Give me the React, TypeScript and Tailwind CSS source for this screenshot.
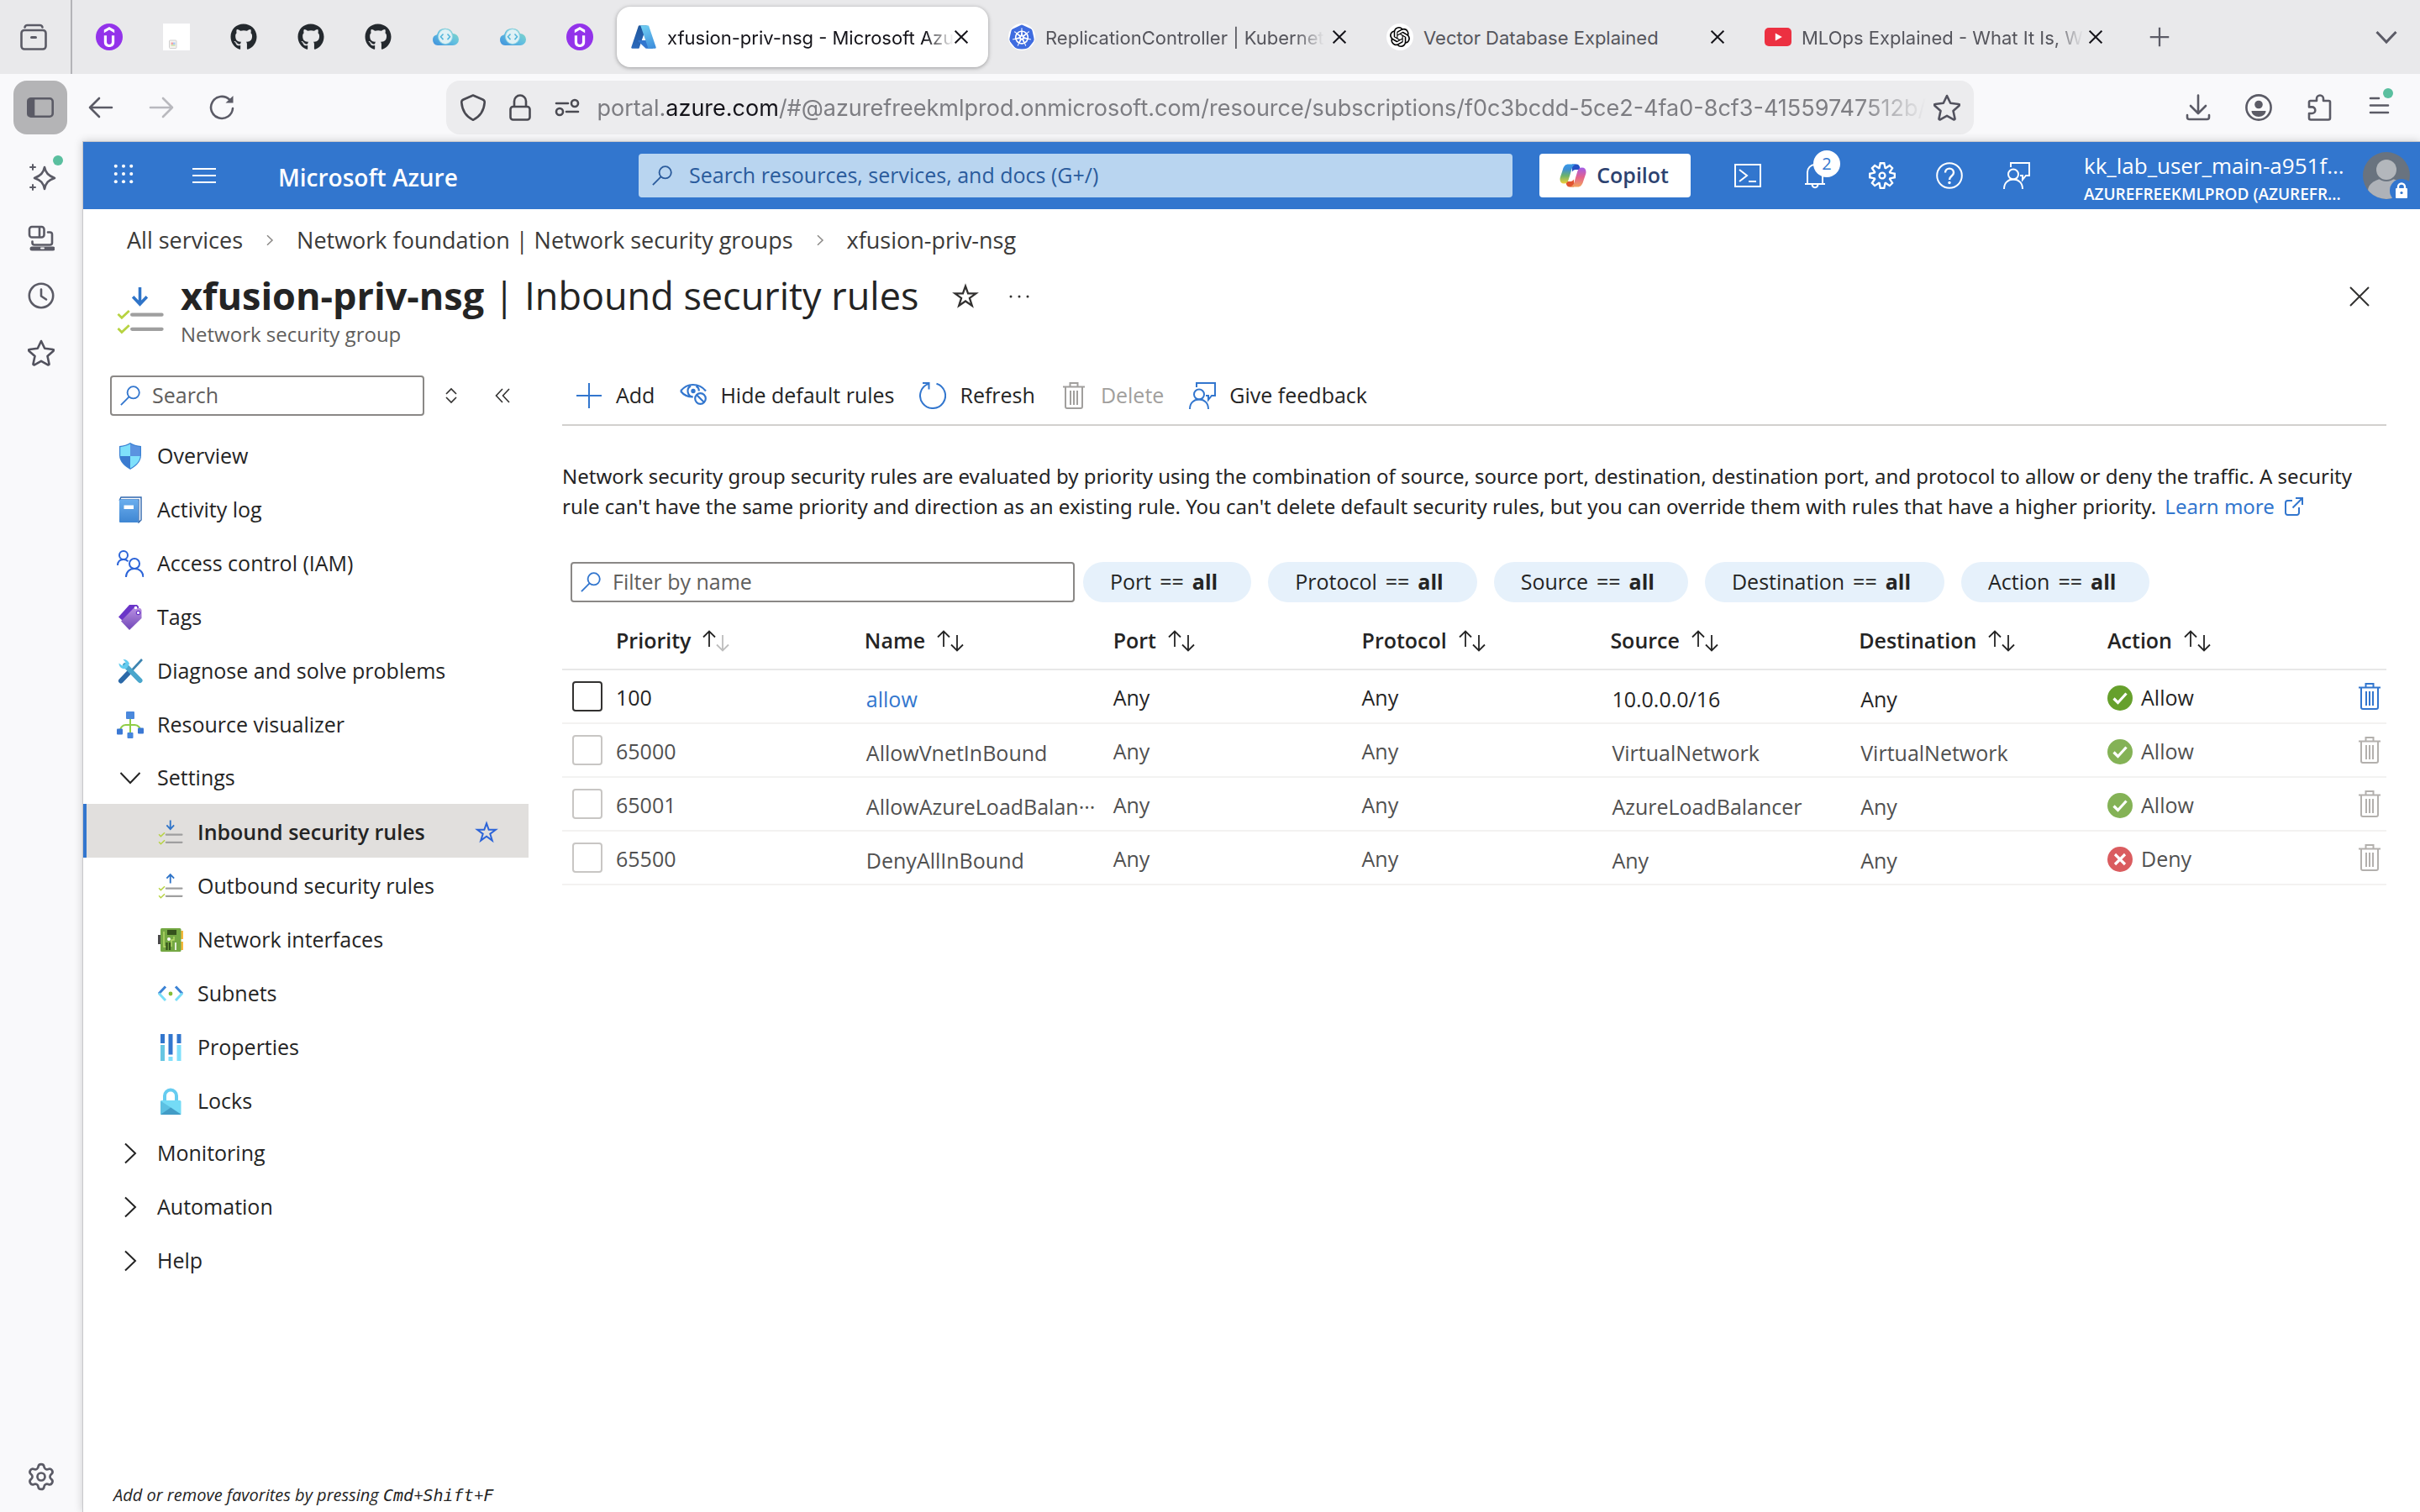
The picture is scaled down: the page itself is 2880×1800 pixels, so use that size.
import React from "react";
import clsx from "clsx";
import { Settings } from "lucide-react";
import { FaGithub } from "react-icons/fa";
import { SiKubernetes, SiOpenai, SiUdemy } from "react-icons/si";
import { VscSettingsGear } from "react-icons/vsc";

type IconProps = { className?: string };

/* ---------- browser icons ---------- */

function ArchiveIcon() {
  return (
    <svg viewBox="0 0 32 32" className="size-8" fill="none" stroke="#5b5b66" strokeWidth="2.600" strokeLinecap="round">
      <path d="M5.500 4.500C6 2.200 7 2 8.500 2h15c1.500 0 2.500.2 3 2.500" />
      <rect x="1.500" y="8" width="29" height="22.500" rx="3.500" />
      <path d="M13.500 16.500h5" strokeWidth="3" />
    </svg>
  );
}

function CloudIcon({ id }: { id: string }) {
  return (
    <svg viewBox="0 0 32 32" className="size-8">
      <defs>
        <linearGradient id={id} x1="0" y1="1" x2="1" y2="0">
          <stop offset="0" stopColor="#3d8fdc" />
          <stop offset="0.5" stopColor="#62bfe0" />
          <stop offset="1" stopColor="#8adcc0" />
        </linearGradient>
      </defs>
      <path d="M7 26a6.500 6.500 0 0 1-1-12.800A10 10 0 0 1 25 12a7 7 0 0 1 0 14z" fill={`url(#${id})`} />
      <ellipse cx="16" cy="15.500" rx="8.500" ry="9" fill="#dff1f5" stroke="#8ed3e4" strokeWidth="1" />
      <path d="M13.500 12.500l-3 3.300 3 3.300M18.500 12.500l3 3.300-3 3.300" fill="none" stroke="#55b7dc" strokeWidth="1.600" />
    </svg>
  );
}

function UdemyIcon() {
  return (
    <span className="flex size-8 items-center justify-center rounded-full bg-[#9333ea]">
      <SiUdemy className="size-6 text-white" />
    </span>
  );
}

function DocIcon() {
  return (
    <svg viewBox="0 0 32 32" className="size-8">
      <rect width="32" height="32" fill="#fff" />
      <rect x="7.500" y="20" width="8.500" height="9.500" rx="1" fill="#f7f4f0" stroke="#cfcfcf" />
      <rect x="9.500" y="22.500" width="2.500" height="2.500" fill="#f3a4a4" />
      <rect x="12" y="22.500" width="2.500" height="2.500" fill="#a9c8f5" />
      <rect x="9.500" y="25" width="5" height="2" fill="#d6e6b8" />
    </svg>
  );
}

function AzureLogo() {
  return (
    <svg viewBox="0 0 96 96" className="size-8">
      <defs>
        <linearGradient id="az-a" x1="60.900" y1="9.600" x2="18.700" y2="134.400" gradientUnits="userSpaceOnUse" gradientTransform="translate(0 -10)">
          <stop stopColor="#1d5396" />
          <stop offset="1" stopColor="#2f70c8" />
        </linearGradient>
        <linearGradient id="az-b" x1="46" y1="10" x2="82" y2="86" gradientUnits="userSpaceOnUse">
          <stop stopColor="#6fcdf2" />
          <stop offset="1" stopColor="#3f8fdc" />
        </linearGradient>
      </defs>
      <path fill="url(#az-a)" d="M33.338 6.544h26.038l-27.030 80.087a4.152 4.152 0 0 1-3.933 2.824H8.149a4.145 4.145 0 0 1-3.928-5.470L29.404 9.368a4.152 4.152 0 0 1 3.934-2.825z" />
      <path fill="#3276ce" d="M71.175 60.261h-41.290a1.911 1.911 0 0 0-1.305 3.309l26.532 24.764a4.171 4.171 0 0 0 2.846 1.121h23.380z" />
      <path fill="url(#az-b)" d="M66.595 9.364a4.145 4.145 0 0 0-3.928-2.820H33.648a4.146 4.146 0 0 1 3.928 2.820l25.184 74.620a4.146 4.146 0 0 1-3.928 5.472h29.020a4.146 4.146 0 0 0 3.927-5.472z" />
    </svg>
  );
}

function KubernetesIcon() {
  return <SiKubernetes className="size-8 rounded-full bg-white p-px text-[#3f6ce0]" />;
}

function OpenAiIcon() {
  return (
    <span className="flex size-8 items-center justify-center rounded-full bg-white">
      <SiOpenai className="size-6 text-black" />
    </span>
  );
}

function YoutubeIcon() {
  return (
    <svg viewBox="0 0 32 32" className="size-8">
      <rect y="5" width="32" height="22" rx="5" fill="#ec3041" />
      <path d="M12.800 11.500v9l8-4.500z" fill="#fff" />
    </svg>
  );
}

function CrossIcon({ className }: IconProps) {
  return (
    <svg viewBox="0 0 24 24" className={className} fill="none" stroke="currentColor">
      <path d="M1 1l22 22M23 1L1 23" />
    </svg>
  );
}

function PanelIcon() {
  return (
    <svg viewBox="0 0 32 24" className="w-8" fill="none" stroke="#5b5b66" strokeWidth="2.600">
      <rect x="1.300" y="1.300" width="29.400" height="21.400" rx="3.500" />
      <path d="M2 3h6v18H2z" fill="#5b5b66" />
    </svg>
  );
}

function BackIcon({ className }: IconProps) {
  return (
    <svg viewBox="0 0 32 32" className={className} fill="none" stroke="currentColor" strokeWidth="2.600" strokeLinecap="round" strokeLinejoin="round">
      <path d="M29 16H3M14 5L3 16l11 11" />
    </svg>
  );
}

function ReloadIcon() {
  return (
    <svg viewBox="0 0 32 32" className="size-8" fill="none" stroke="#5b5b66" strokeWidth="2.600" strokeLinecap="round">
      <path d="M29 17a13 13 0 1 1-4-10.500" />
      <path d="M29.500 2v8.500h-9z" fill="#5b5b66" stroke="none" />
    </svg>
  );
}

function ShieldIcon() {
  return (
    <svg viewBox="0 0 32 32" className="size-8 shrink-0" fill="none" stroke="#4a4a52" strokeWidth="2.600" strokeLinejoin="round">
      <path d="M16 1.500l11.500 5c1.600.7 2.400 2 2.200 3.700C29 19 25 26.500 16 30.800 7 26.500 3 19 2.300 10.200 2.100 8.500 2.900 7.200 4.500 6.500z" />
    </svg>
  );
}

function LockIcon() {
  return (
    <svg viewBox="0 0 32 32" className="size-8 shrink-0" fill="none" stroke="#4a4a52" strokeWidth="2.600">
      <rect x="4.500" y="15" width="23" height="15.500" rx="3" />
      <path d="M9 15V8.500a7 7 0 0 1 14 0V15" />
    </svg>
  );
}

function TuneIcon() {
  return (
    <svg viewBox="0 0 32 32" className="size-8 shrink-0" fill="none" stroke="#4a4a52" strokeWidth="2.600" strokeLinecap="round">
      <path d="M3 11h14M15 21h14" />
      <circle cx="25" cy="11" r="4" />
      <circle cx="7" cy="21" r="4" />
    </svg>
  );
}

function RoundStarIcon() {
  return (
    <svg viewBox="0 0 32 32" className="size-8" fill="none" stroke="#52525e" strokeWidth="2.600" strokeLinejoin="round">
      <path d="M16 2l4.200 8.800 9.800 1.200c1 .1 1.300 1 .6 1.700L23.500 20l2 9.200c.2 1-.7 1.600-1.500 1.100L16 25.800l-8 4.500c-.8.500-1.700-.1-1.500-1.100l2-9.200-7.100-6.300c-.7-.7-.4-1.600.6-1.700l9.800-1.200z" />
    </svg>
  );
}

function DownloadIcon() {
  return (
    <svg viewBox="0 0 32 32" className="size-8" fill="none" stroke="#5b5b66" strokeWidth="2.600" strokeLinecap="round" strokeLinejoin="round">
      <path d="M16 1.500v21M7 14l9 9 9-9M3 25v2.500A2.500 2.500 0 0 0 5.500 30h21a2.500 2.500 0 0 0 2.500-2.500V25" />
    </svg>
  );
}

function ProfileIcon() {
  return (
    <svg viewBox="0 0 32 32" className="size-8">
      <circle cx="16" cy="16" r="14.600" fill="none" stroke="#5b5b66" strokeWidth="2.600" />
      <circle cx="16" cy="12.500" r="4.800" fill="#5b5b66" />
      <path d="M7.500 20h17c0 4-4 7-8.500 7s-8.500-3-8.500-7z" fill="#5b5b66" />
    </svg>
  );
}

function PuzzleIcon() {
  return (
    <svg viewBox="0 0 32 32" className="size-8" fill="none" stroke="#5b5b66" strokeWidth="2.600" strokeLinejoin="round">
      <path d="M4 13V9.500A1.500 1.500 0 0 1 5.500 8H13V5.500a4 4 0 0 1 8 0V8h6.500A1.500 1.500 0 0 1 29 9.500v19a2 2 0 0 1-2 2H6a2 2 0 0 1-2-2V23h3.500a3.800 3.800 0 0 0 0-7.600H4z" />
    </svg>
  );
}

function MenuDotIcon() {
  return (
    <svg viewBox="0 0 32 40" className="h-10 w-8" fill="none" stroke="#5b5b66" strokeWidth="2.600" strokeLinecap="round">
      <path d="M5 13h10M5 21.500h21M5 30h21" />
      <circle cx="26" cy="7" r="6" fill="#5abf9f" stroke="none" />
    </svg>
  );
}

function SparkleIcon() {
  return (
    <svg viewBox="0 0 44 44" className="size-11" fill="none" stroke="#5b5b66" strokeWidth="2.600" strokeLinejoin="round" strokeLinecap="round">
      <path d="M22 15c1.500 7 4.500 10 12 13-7.500 2.500-10.500 5.500-12 13-1.500-7.500-4.500-10.500-12-13 7.500-3 10.500-6 12-13z" />
      <path d="M8 12v6M5 15h6M8 36v6M5 39h6" strokeWidth="2" />
      <circle cx="38" cy="7" r="6" fill="#5abf9f" stroke="none" />
    </svg>
  );
}

function DevicesIcon() {
  return (
    <svg viewBox="0 0 32 32" className="size-8" fill="none" stroke="#5b5b66" strokeWidth="2.600" strokeLinejoin="round" strokeLinecap="round">
      <rect x="2" y="2" width="17.500" height="12.500" rx="3" />
      <path d="M14 3v11M24 8.500h2.500a2.500 2.500 0 0 1 2.500 2.500v10c0 1.500-1 2.500-2.500 2.500H8c-1.500 0-2.500-1-2.500-2.500v-1.500" />
      <path d="M5 28h25" strokeWidth="5" />
      <path d="M16 27.500h3" stroke="#f9f9fb" strokeWidth="2" />
    </svg>
  );
}

function ClockIcon() {
  return (
    <svg viewBox="0 0 32 32" className="size-8" fill="none" stroke="#5b5b66" strokeWidth="2.600" strokeLinecap="round" strokeLinejoin="round">
      <circle cx="16" cy="16" r="14.200" />
      <path d="M16 8.500v8l6 4" />
    </svg>
  );
}

/* ---------- portal icons ---------- */

function SearchIcon({ className }: IconProps) {
  return (
    <svg viewBox="0 0 26 26" className={clsx("size-6 shrink-0", className)} fill="none" stroke="currentColor" strokeWidth="2">
      <circle cx="17" cy="9" r="7.700" />
      <path d="M11.500 14.500L1 25" />
    </svg>
  );
}

function StarIcon({ className }: IconProps) {
  return (
    <svg viewBox="0 0 28 28" className={className} fill="none" stroke="currentColor" strokeWidth="2" strokeLinejoin="miter">
      <path d="M14 3.200l2.700 7.600h8.200l-6.600 4.900 2.500 7.900L14 18.800l-6.800 4.800 2.500-7.900-6.600-4.900h8.200z" />
    </svg>
  );
}

function RulesIcon({ up, className }: IconProps & { up?: boolean }) {
  return (
    <svg viewBox="0 0 57 62" className={className} fill="none">
      <path d={up ? "M28 24V4M19.500 13L28 4l8.500 9" : "M28 3v20M19.500 14.500L28 23.500l8.500-9"} stroke="#2f74c8" strokeWidth="3.600" />
      <path d="M18.500 36.300h36M18.500 53.800h36" stroke="#9f9f9f" strokeWidth="4.400" strokeLinecap="round" />
      <path d="M1.500 35.500L6 40l9-8.500M1.500 53L6 57.500l9-8.500" stroke="#b7d341" strokeWidth="2.800" />
    </svg>
  );
}

function OverviewIcon() {
  return (
    <svg viewBox="0 0 32 32" className="size-8">
      <path d="M16 0c3.500 2.500 8 3.500 13 4v11c0 8-7 13.500-13 17C10 28.500 3 23 3 15V4c5-.5 9.500-1.500 13-4z" fill="#3b82d4" />
      <path d="M16 1.500V16H4.200V5.200C9 4.500 12.800 3.500 16 1.500z" fill="#7fe0fb" />
      <path d="M16 1.500V16h11.800V5.200C23 4.500 19.200 3.500 16 1.500z" fill="#5b93e0" />
      <path d="M4.200 16H16v14.500C10 27 4.500 22.500 4.200 16z" fill="#3b7bd0" />
      <path d="M27.800 16H16v14.500C22 27 27.500 22.500 27.800 16z" fill="#7fe0fb" />
    </svg>
  );
}

function LogIcon() {
  return (
    <svg viewBox="0 0 32 32" className="size-8">
      <defs>
        <linearGradient id="log" x1="0" y1="0" x2="0" y2="1">
          <stop stopColor="#6aaeee" />
          <stop offset="1" stopColor="#3f86d2" />
        </linearGradient>
      </defs>
      <path d="M5 1h24v27l-3 3V4H3.500z" fill="#fff" stroke="#2f66ad" strokeWidth="1.400" />
      <rect x="3" y="3.500" width="22.500" height="27.500" rx="1" fill="url(#log)" />
      <rect x="8.500" y="10.500" width="11.500" height="4.500" fill="#fff" />
    </svg>
  );
}

function AccessIcon() {
  return (
    <svg viewBox="0 0 32 32" className="size-8" fill="none" stroke="#2c64d8" strokeWidth="2">
      <circle cx="8" cy="6" r="5" />
      <path d="M1 18c0-4.500 3-7 7-7 2.500 0 4 .8 5.500 2.300" />
      <circle cx="21" cy="16" r="6" />
      <path d="M11 32c0-6 4-10 10-10s10.500 4 10.500 10" />
    </svg>
  );
}

function TagsIcon() {
  return (
    <svg viewBox="0 0 32 32" className="size-8">
      <defs>
        <linearGradient id="tag" x1="0" y1="0" x2="0" y2="1">
          <stop stopColor="#b78ee0" />
          <stop offset="1" stopColor="#7046b8" />
        </linearGradient>
      </defs>
      <path d="M15 1h9l2 2v6L7 20l-5-4.500z" fill="#6a35c8" />
      <path d="M20 5h8l1.500 2v10L15 31 5 20.500z" fill="url(#tag)" />
      <circle cx="22.500" cy="4.500" r="1.800" fill="#fff" />
      <circle cx="25.500" cy="10.500" r="2.200" fill="#fff" stroke="#6a35c8" strokeWidth="1.200" />
    </svg>
  );
}

function ToolsIcon() {
  return (
    <svg viewBox="0 0 32 32" className="size-8" fill="none">
      <path d="M30 2l-12 13" stroke="#3d84b0" strokeWidth="2.600" />
      <path d="M14 18L5 27.500" stroke="#2c69a8" strokeWidth="6" strokeLinecap="round" />
      <path d="M10 9l17.500 18" stroke="#4aa6cc" strokeWidth="6" strokeLinecap="round" />
      <path d="M2.500 6.500a6.500 6.500 0 0 0 9.500 6l3-5.500a7 7 0 0 0-7.500-5l3 3.500-1 3-3 1z" fill="#63cdf0" />
    </svg>
  );
}

function VisualizerIcon() {
  return (
    <svg viewBox="0 0 32 32" className="size-8">
      <path d="M16 9v17M3.500 25c0-5 3-9 7-9h11c4 0 7 4 7 8" fill="none" stroke="#8fce45" strokeWidth="2" />
      <rect x="11" y="0" width="10" height="9" rx="1" fill="#4a88dc" />
      <rect x="0" y="20.500" width="7" height="7" rx="1" fill="#3b78d4" />
      <rect x="25" y="19.500" width="7" height="7" rx="1" fill="#3b78d4" />
      <rect x="12.500" y="25" width="7" height="7" rx="1" fill="#4585dc" />
    </svg>
  );
}

function NicIcon() {
  return (
    <svg viewBox="0 0 32 32" className="size-8">
      <rect x="1" y="10" width="3" height="11" fill="#4a4a4a" />
      <rect x="27" y="5" width="4" height="10" fill="#f4b73b" />
      <rect x="27" y="18" width="4" height="10" fill="#f4b73b" />
      <rect x="4" y="2" width="24.500" height="28" rx="1.500" fill="#74a843" />
      <rect x="12" y="4" width="11" height="6" fill="#35521c" />
      <path d="M8 6v18h3M20 12v4h-3v8" fill="none" stroke="#b9dc6a" strokeWidth="1.400" />
      <circle cx="14" cy="15" r="2" fill="#fff" />
      <path d="M11.500 19v9M15 19v9" stroke="#35521c" strokeWidth="2.200" />
      <path d="M22 19v9" stroke="#fff" strokeWidth="1.600" />
    </svg>
  );
}

function SubnetIcon() {
  return (
    <svg viewBox="0 0 32 32" className="size-8" fill="none" strokeWidth="3">
      <path d="M10 7.500L2 16M22 7.500l8 8.500" stroke="#3b82d4" />
      <path d="M2 15.500l8 8.500M30 15.500L22 24" stroke="#79def8" />
      <circle cx="16" cy="16" r="2.400" fill="#84bd38" />
    </svg>
  );
}

function PropertiesIcon() {
  return (
    <svg viewBox="0 0 32 32" className="size-8">
      <rect x="4" y="0" width="5" height="11" fill="#3276ce" />
      <rect x="4" y="13" width="5" height="19" fill="#66c6e2" />
      <rect x="13.500" y="0" width="5" height="24.500" fill="#3276ce" />
      <rect x="13.500" y="27" width="5" height="5" fill="#7fe0fb" />
      <rect x="23.500" y="0" width="5" height="11" fill="#3276ce" />
      <rect x="23.500" y="13" width="5" height="19" fill="#7fe0fb" />
    </svg>
  );
}

function PadlockIcon() {
  return (
    <svg viewBox="0 0 32 32" className="size-8">
      <path d="M9 16V9.500a7 7 0 0 1 14 0V16" fill="none" stroke="#66ccf0" strokeWidth="4" />
      <rect x="4" y="15" width="24.500" height="17" rx="1.500" fill="#74dbf6" />
      <path d="M4 15.500L28.500 31.500c-.3.500-.5.500-1 .5h-22C4.500 32 4 31.500 4 30.500z" fill="#5cc0e2" />
      <path d="M16.200 23.500L28 31.600c-.2.300-.5.400-1 .4H5.500c-.5 0-.8-.1-1-.4z" fill="#429cc6" />
    </svg>
  );
}

function ChevronIcon({ className }: IconProps) {
  return (
    <svg viewBox="0 0 32 32" className={className} fill="none" stroke="currentColor">
      <path d="M10 4.500L22 16 10 27.500" />
    </svg>
  );
}

function SortIcon({ faded }: { faded?: boolean }) {
  return (
    <svg viewBox="0 0 32 26" className="w-8" fill="none" stroke="#242424" strokeWidth="1.800">
      <path d="M8 20V1.500M1 8.500l7-7 7 7" />
      <path d="M24 6v18.500M17 17.500l7 7 7-7" stroke={faded ? "#bdbdbd" : "#242424"} />
    </svg>
  );
}

function PlusIcon({ className }: IconProps) {
  return (
    <svg viewBox="0 0 32 32" className={className} fill="none" stroke="currentColor" strokeWidth="2">
      <path d="M16 1v30M1 16h30" />
    </svg>
  );
}

function HideIcon() {
  return (
    <svg viewBox="0 0 32 32" className="size-8" fill="none" stroke="#3276ce" strokeWidth="2.200">
      <path d="M1 10.500C5 5.500 10 3 15.500 3S27 5.500 31 10.500M1 10.500C4 14.500 9 17.500 15.500 17.500" />
      <path d="M13 4.500a7 7 0 0 0 2.500 13M19.500 4.500a7 7 0 0 1 3.300 6" />
      <circle cx="16" cy="10.500" r="1.600" fill="#3276ce" />
      <circle cx="24.500" cy="19.500" r="6.300" />
      <path d="M20 15l9 9" />
    </svg>
  );
}

function RefreshIcon() {
  return (
    <svg viewBox="0 0 32 32" className="size-8" fill="none" stroke="#3276ce" strokeWidth="2">
      <path d="M20.500 1.700A15 15 0 1 1 11 1.900M4 1h7.500v7.500" />
    </svg>
  );
}

function TrashIcon({ className }: IconProps) {
  return (
    <svg viewBox="0 0 32 32" className={clsx("size-8", className)} fill="none" stroke="currentColor" strokeWidth="2">
      <path d="M3 5.500h26M11.500 5.500V1h9v4.500M6 5.500V29c0 1.200.8 2 2 2h16c1.200 0 2-.8 2-2V5.500M12 10v17M16 10v17M20 10v17" />
    </svg>
  );
}

function FeedbackIcon({ className }: IconProps) {
  return (
    <svg viewBox="0 0 32 32" className={clsx("size-8", className)} fill="none" stroke="currentColor" strokeWidth="2">
      <path d="M9 6V1h22v15h-4l-4 5v-5h-3" />
      <circle cx="12" cy="14.500" r="6" />
      <path d="M1 32c0-7 4.500-11.500 11-11.500S23 25 23 32" />
    </svg>
  );
}

function StatusIcon({ action }: { action: string }) {
  const deny = action === "Deny";
  return (
    <svg viewBox="0 0 30 30" className="size-[30px]" fill="none" stroke="#fff" strokeWidth="3.200">
      <circle cx="15" cy="15" r="15" fill={deny ? "#d13438" : "#66a02c"} stroke="none" />
      <path d={deny ? "M9 9l12 12M21 9L9 21" : "M7.500 15.500l5 5 10-11"} />
    </svg>
  );
}

function CopilotIcon() {
  const ribbon = "M10.500 2.500h9.500c-3.300.6-4.600 2.700-5.500 5.800l-3.800 12.600c-1 3.100-2.400 4.600-5.400 4.600C1.500 25.500-.3 22.500.8 18L4 8.500c1.200-3.900 3-6 6.500-6z";
  return (
    <svg viewBox="0 0 32 32" className="size-8">
      <defs>
        <linearGradient id="cp-a" x1="0" y1="0" x2="0" y2="1">
          <stop stopColor="#3a9be8" />
          <stop offset="0.250" stopColor="#3d8fd8" />
          <stop offset="0.600" stopColor="#6db36c" />
          <stop offset="1" stopColor="#efd03a" />
        </linearGradient>
        <linearGradient id="cp-b" x1="0" y1="0" x2="0" y2="1">
          <stop stopColor="#f2a35c" />
          <stop offset="0.500" stopColor="#e5628c" />
          <stop offset="1" stopColor="#a25ce8" />
        </linearGradient>
      </defs>
      <path d="M15 2.500h5c2.500 0 3.500 1.500 4.200 4L25 9h-6c-2 0-3 1-4 2.500z" fill="#2550c4" />
      <path d="M17 29.500h-5c-2.500 0-3.500-1.500-4.200-4L7 23h6c2 0 3-1 4-2.500z" fill="#e0532f" />
      <path d={ribbon} fill="url(#cp-a)" />
      <path d={ribbon} fill="url(#cp-b)" transform="rotate(180 16 16)" />
    </svg>
  );
}

function Avatar() {
  return (
    <svg viewBox="0 0 56 56" className="size-14">
      <defs>
        <clipPath id="av">
          <circle cx="28" cy="28" r="28" />
        </clipPath>
      </defs>
      <g clipPath="url(#av)">
        <rect width="56" height="56" fill="#69737f" />
        <ellipse cx="28" cy="46" rx="22" ry="15" fill="#aeb2b8" />
        <circle cx="28" cy="21" r="14" fill="#69737f" />
        <circle cx="28" cy="21" r="12" fill="#b3b7bc" />
      </g>
      <circle cx="46" cy="46" r="14" fill="#3276ce" />
      <rect x="39" y="43" width="14" height="12" rx="1" fill="#fff" />
      <path d="M42 44v-2.500a4 4 0 0 1 8 0V44" fill="none" stroke="#fff" strokeWidth="2.400" />
      <circle cx="46" cy="48.500" r="1.600" fill="#3276ce" />
    </svg>
  );
}

/* ---------- data ---------- */

const pinnedTabs = [
  { name: "Udemy", icon: <UdemyIcon /> },
  { name: "Document", icon: <DocIcon /> },
  { name: "GitHub", icon: <FaGithub className="size-8 text-[#24292e]" /> },
  { name: "GitHub", icon: <FaGithub className="size-8 text-[#24292e]" /> },
  { name: "GitHub", icon: <FaGithub className="size-8 text-[#24292e]" /> },
  { name: "Cloud", icon: <CloudIcon id="cloud-1" /> },
  { name: "Cloud", icon: <CloudIcon id="cloud-2" /> },
  { name: "Udemy", icon: <UdemyIcon /> },
];

const tabs = [
  { title: "xfusion-priv-nsg - Microsoft Azu", icon: <AzureLogo />, active: true, faded: true },
  { title: "ReplicationController | Kubernet", icon: <KubernetesIcon />, faded: true },
  { title: "Vector Database Explained", icon: <OpenAiIcon /> },
  { title: "MLOps Explained - What It Is, W", icon: <YoutubeIcon />, faded: true },
];

const menu = [
  { label: "Overview", icon: <OverviewIcon /> },
  { label: "Activity log", icon: <LogIcon /> },
  { label: "Access control (IAM)", icon: <AccessIcon /> },
  { label: "Tags", icon: <TagsIcon /> },
  { label: "Diagnose and solve problems", icon: <ToolsIcon /> },
  { label: "Resource visualizer", icon: <VisualizerIcon /> },
];

const settingsMenu = [
  { label: "Inbound security rules", icon: <RulesIcon className="size-8" />, active: true },
  { label: "Outbound security rules", icon: <RulesIcon up className="size-8" /> },
  { label: "Network interfaces", icon: <NicIcon /> },
  { label: "Subnets", icon: <SubnetIcon /> },
  { label: "Properties", icon: <PropertiesIcon /> },
  { label: "Locks", icon: <PadlockIcon /> },
];

const commands = [
  { label: "Add", icon: <PlusIcon className="size-8 text-[#3276ce]" /> },
  { label: "Hide default rules", icon: <HideIcon /> },
  { label: "Refresh", icon: <RefreshIcon /> },
  { label: "Delete", icon: <TrashIcon />, disabled: true },
  { label: "Give feedback", icon: <FeedbackIcon className="text-[#3276ce]" /> },
];

const columns = ["Priority", "Name", "Port", "Protocol", "Source", "Destination", "Action"];

const rules = [
  { priority: 100, name: "allow", source: "10.0.0.0/16", destination: "Any", action: "Allow", custom: true },
  { priority: 65000, name: "AllowVnetInBound", source: "VirtualNetwork", destination: "VirtualNetwork", action: "Allow" },
  { priority: 65001, name: "AllowAzureLoadBalan···", source: "AzureLoadBalancer", destination: "Any", action: "Allow" },
  { priority: 65500, name: "DenyAllInBound", source: "Any", destination: "Any", action: "Deny" },
];

/* ---------- browser chrome ---------- */

function TabStrip() {
  return (
    <div className="flex h-[88px] shrink-0 items-center bg-[#e9e9eb]">
      <button aria-label="Recent browsing" className="flex h-full w-[86px] shrink-0 items-center justify-center border-r-2 border-[#b4b4b8] pr-1">
        <ArchiveIcon />
      </button>
      <div className="flex shrink-0 pl-1">
        {pinnedTabs.map((t, i) => (
          <button key={i} aria-label={t.name} className="flex h-18 w-20 items-center justify-center">
            {t.icon}
          </button>
        ))}
      </div>
      {tabs.map((t) => (
        <div key={t.title} className="w-[450px] px-1">
          <div
            className={clsx(
              "flex h-18 items-center rounded-2xl px-4",
              t.active && "bg-white shadow-[0_1px_5px_rgba(0,0,0,0.35)]"
            )}
          >
            <span className="shrink-0">{t.icon}</span>
            <span
              className={clsx(
                "ml-3 pt-0.5 text-[22px] whitespace-nowrap",
                t.active ? "text-[#15141a]" : "text-[#55555c]",
                t.faded && "[mask-image:linear-gradient(to_right,black_90%,transparent)]"
              )}
            >
              {t.title}
            </span>
            <button aria-label="Close tab" className="ml-auto flex shrink-0 pr-2 text-[#15141a]">
              <CrossIcon className="size-4 stroke-3" />
            </button>
          </div>
        </div>
      ))}
      <button aria-label="New tab" className="flex w-20 items-center justify-center text-[#5b5b66]">
        <PlusIcon className="size-6 stroke-3" />
      </button>
      <button aria-label="List all tabs" className="mr-6 ml-auto text-[#5b5b66]">
        <ChevronIcon className="size-8 rotate-90 stroke-3" />
      </button>
    </div>
  );
}

function AddressBar() {
  return (
    <div className="flex h-20 shrink-0 items-center bg-[#f9f9fb] px-4">
      <button aria-label="Sidebar" className="flex h-16 w-16 items-center justify-center rounded-2xl bg-[#b4b4b6]">
        <PanelIcon />
      </button>
      <div className="ml-1 flex">
        <button aria-label="Back" className="flex w-18 justify-center text-[#5b5b66]">
          <BackIcon className="size-8" />
        </button>
        <button aria-label="Forward" disabled className="flex w-18 justify-center text-[#b9b9be]">
          <BackIcon className="size-8 rotate-180" />
        </button>
        <button aria-label="Reload" className="flex w-18 justify-center">
          <ReloadIcon />
        </button>
      </div>
      <div className="flex-4" />
      <div className="mr-5 flex h-16 min-w-0 flex-31 items-center rounded-2xl bg-[#ececee] px-4">
        <div className="flex shrink-0 items-center gap-6">
          <ShieldIcon />
          <LockIcon />
          <TuneIcon />
        </div>
        <span className="ml-5 pt-0.5 text-[27px] whitespace-nowrap text-[#7d7d82] [mask-image:linear-gradient(to_right,black_95%,transparent)]">
          portal.<span className="text-[#15141a]">azure.com</span>
          /#@azurefreekmlprod.onmicrosoft.com/resource/subscriptions/f0c3bcdd-5ce2-4fa0-8cf3-41559747512b/
        </span>
        <button aria-label="Bookmark this page" className="ml-auto shrink-0">
          <RoundStarIcon />
        </button>
      </div>
      <div className="flex-4" />
      <div className="flex items-center gap-10">
        <button aria-label="Downloads"><DownloadIcon /></button>
        <button aria-label="Account"><ProfileIcon /></button>
        <button aria-label="Extensions"><PuzzleIcon /></button>
        <button aria-label="Application menu" className="mr-4 pb-2"><MenuDotIcon /></button>
      </div>
    </div>
  );
}

function SideRail() {
  return (
    <div className="flex w-[98px] shrink-0 flex-col items-center bg-[#f9f9fb] pt-4 pb-6">
      <button aria-label="AI chatbot" className="ml-2"><SparkleIcon /></button>
      <button aria-label="Synced tabs" className="mt-10"><DevicesIcon /></button>
      <button aria-label="History" className="mt-9"><ClockIcon /></button>
      <button aria-label="Bookmarks" className="mt-9"><RoundStarIcon /></button>
      <button aria-label="Customize sidebar" className="mt-auto">
        <Settings className="size-9 text-[#5b5b66]" strokeWidth={1.8} />
      </button>
    </div>
  );
}

/* ---------- portal ---------- */

function PortalHeader() {
  return (
    <header className="flex h-20 shrink-0 items-center bg-[#3276ce] text-white">
      <div className="flex w-[661px] shrink-0 items-center">
        <button aria-label="App launcher" className="flex w-24 justify-center pb-1">
          <svg viewBox="0 0 26 26" className="size-6" fill="#fff">
            {[3, 13, 23].map((y) => [3, 13, 23].map((x) => <circle key={`${x}-${y}`} cx={x} cy={y} r="2.200" />))}
          </svg>
        </button>
        <button aria-label="Show portal menu" className="flex w-24 justify-center">
          <svg viewBox="0 0 28 20" className="w-7" stroke="#fff" strokeWidth="2">
            <path d="M0 2h28M0 10h28M0 18h28" />
          </svg>
        </button>
        <a href="#" className="ml-10 pt-1 text-[28px] font-semibold">Microsoft Azure</a>
      </div>
      <label className="flex h-[52px] flex-1 items-center gap-5 rounded bg-[#b9d5f0] px-4 text-[#2a5b9c]">
        <SearchIcon />
        <input
          type="search"
          aria-label="Search resources, services, and docs"
          placeholder="Search resources, services, and docs (G+/)"
          className="min-w-0 flex-1 bg-transparent outline-none placeholder:text-[#2a5b9c]"
        />
      </label>
      <button className="ml-8 flex h-[52px] items-center gap-3 rounded bg-white pr-6.5 pl-6 font-semibold text-[#2c4270]">
        <CopilotIcon />
        Copilot
      </button>
      <div className="ml-7 flex">
        <button aria-label="Cloud Shell" className="flex w-20 items-center justify-center">
          <svg viewBox="0 0 32 28" className="w-8" fill="none" stroke="#fff" strokeWidth="2">
            <path d="M1 1h30v26H1zM6 7l9 7-9 7M17 21h9" />
          </svg>
        </button>
        <button aria-label="Notifications" className="relative flex w-20 items-center justify-center">
          <svg viewBox="0 0 28 32" className="w-7" fill="none" stroke="#fff" strokeWidth="2">
            <path d="M2 26h24M5 26V12a9 9 0 0 1 18 0v14M10.500 26c0 5.500 7 5.500 7 0" />
          </svg>
          <span className="absolute -top-3.5 left-[38px] flex size-8 items-center justify-center rounded-full bg-white text-xl text-[#3276ce]">
            2
          </span>
        </button>
        <button aria-label="Settings" className="flex w-20 items-center justify-center">
          <VscSettingsGear className="size-8" />
        </button>
        <button aria-label="Help" className="flex w-20 items-center justify-center">
          <svg viewBox="0 0 32 32" className="size-8" fill="none" stroke="#fff" strokeWidth="2">
            <circle cx="16" cy="16" r="14.800" />
            <path d="M11 12.500c0-6.500 10-6.500 10 0 0 4-5 4-5 8.500" strokeWidth="2.400" />
            <circle cx="16" cy="24.500" r="1.700" fill="#fff" stroke="none" />
          </svg>
        </button>
        <button aria-label="Feedback" className="flex w-20 items-center justify-center">
          <FeedbackIcon />
        </button>
      </div>
      <button className="ml-10 flex items-center pr-3 text-left">
        <span className="w-[332px] pt-3 whitespace-nowrap">
          <span className="block text-[26px] leading-8">kk_lab_user_main-a951f...</span>
          <span className="block text-[19px] leading-9 font-semibold">AZUREFREEKMLPROD (AZUREFR...</span>
        </span>
        <Avatar />
      </button>
    </header>
  );
}

function Breadcrumb() {
  return (
    <nav className="flex h-[74px] items-center gap-6 pl-[52px] text-[27px] text-[#3b3a39]">
      <a href="#">All services</a>
      <ChevronIcon className="size-4 stroke-3 text-[#8a8886]" />
      <a href="#">Network foundation | Network security groups</a>
      <ChevronIcon className="size-4 stroke-3 text-[#8a8886]" />
      <a href="#">xfusion-priv-nsg</a>
    </nav>
  );
}

function PageTitle() {
  return (
    <div className="flex items-start pr-15 pl-10">
      <RulesIcon className="mt-4 w-14" />
      <div className="ml-5">
        <h1 className="text-[45px] leading-[58px] text-[#242424]">
          <span className="font-bold">xfusion-priv-nsg</span> | Inbound security rules
        </h1>
        <p className="text-[24px] leading-[34px] text-[#605e5c]">Network security group</p>
      </div>
      <button aria-label="Add to favorites" className="mt-3.5 ml-10 text-[#323130]">
        <StarIcon className="size-8" />
      </button>
      <button aria-label="More actions" className="mt-4 ml-9 flex h-7 items-center">
        <svg viewBox="0 0 24 4" className="w-6" fill="#323130">
          <circle cx="2" cy="2" r="1.500" />
          <circle cx="12" cy="2" r="1.500" />
          <circle cx="22" cy="2" r="1.500" />
        </svg>
      </button>
      <button aria-label="Close" className="mt-[18px] ml-auto text-[#323130]">
        <CrossIcon className="size-6 stroke-2" />
      </button>
    </div>
  );
}

function ResourceMenu() {
  return (
    <aside className="flex w-[530px] shrink-0 flex-col">
      <div className="flex items-center pl-8">
        <label className="flex h-12 w-[374px] items-center gap-3.5 rounded border-2 border-[#8a8886] px-2.5 text-[#3276ce]">
          <SearchIcon />
          <input type="search" aria-label="Search" placeholder="Search" className="w-full min-w-0 outline-none placeholder:text-[#605e5c]" />
        </label>
        <button aria-label="Expand all" className="ml-6">
          <svg viewBox="0 0 16 20" className="w-4" fill="none" stroke="#323130" strokeWidth="1.600">
            <path d="M2 8l6-6 6 6M2 12l6 6 6-6" />
          </svg>
        </button>
        <button aria-label="Collapse menu" className="ml-11">
          <svg viewBox="0 0 18 18" className="w-[18px]" fill="none" stroke="#323130" strokeWidth="1.600">
            <path d="M9 1L1.500 9 9 17M17 1L9.500 9l7.500 8" />
          </svg>
        </button>
      </div>
      <ul className="mt-4">
        {menu.map((m) => (
          <li key={m.label}>
            <a href="#" className="flex h-16 items-center gap-4 pl-10">
              {m.icon}
              {m.label}
            </a>
          </li>
        ))}
        <li>
          <button className="flex h-[62px] items-center gap-4 pl-10">
            <ChevronIcon className="size-8 rotate-90 stroke-2" />
            Settings
          </button>
          <ul>
            {settingsMenu.map((m) => (
              <li
                key={m.label}
                className={clsx(
                  "flex h-16 items-center border-l-4 pt-1 pr-9",
                  m.active ? "border-[#3276ce] bg-[#e1dfdd]" : "border-transparent"
                )}
              >
                <a href="#" className={clsx("flex flex-1 items-center gap-4 pl-21", m.active && "font-semibold")}>
                  {m.icon}
                  {m.label}
                </a>
                {m.active && (
                  <button aria-label="Add to favorites" className="text-[#2c64d8]">
                    <StarIcon className="size-7" />
                  </button>
                )}
              </li>
            ))}
          </ul>
        </li>
        {["Monitoring", "Automation", "Help"].map((label) => (
          <li key={label}>
            <button className="flex h-16 items-center gap-4 pl-10">
              <ChevronIcon className="size-8 stroke-2" />
              {label}
            </button>
          </li>
        ))}
      </ul>
      <p className="mt-auto pb-1 pl-9 text-[20px] leading-8 whitespace-nowrap italic">
        Add or remove favorites by pressing{" "}
        <kbd className="font-['DejaVu_Sans_Mono',monospace]">Cmd</kbd>+
        <kbd className="font-['DejaVu_Sans_Mono',monospace]">Shift</kbd>+
        <kbd className="font-['DejaVu_Sans_Mono',monospace]">F</kbd>
      </p>
    </aside>
  );
}

function CommandBar() {
  return (
    <div className="flex h-[60px] items-start gap-7.5 border-b-2 border-[#d2d0ce] pl-4">
      {commands.map((c) => (
        <button key={c.label} disabled={c.disabled} className={clsx("flex h-12 items-center gap-4", c.disabled && "text-[#a19f9d]")}>
          {c.icon}
          {c.label}
        </button>
      ))}
    </div>
  );
}

function Filters() {
  return (
    <div className="mt-12 flex items-center pl-2.5">
      <label className="flex h-12 w-[600px] items-center gap-3.5 rounded border-2 border-[#8a8886] px-2.5 text-[#3276ce]">
        <SearchIcon />
        <input type="text" aria-label="Filter by name" placeholder="Filter by name" className="w-full min-w-0 outline-none placeholder:text-[#605e5c]" />
      </label>
      <div className="ml-2.5 flex gap-5">
        {["Port", "Protocol", "Source", "Destination", "Action"].map((f) => (
          <button key={f} className="flex h-12 items-center gap-2.5 rounded-full bg-[#e6f1fb] pr-10 pl-8">
            {f} <span>==</span> <b>all</b>
          </button>
        ))}
      </div>
    </div>
  );
}

function RulesTable() {
  return (
    <table className="w-full table-fixed text-left">
      <thead>
        <tr className="h-20 border-b-2 border-[#e8e8e8]">
          <th className="w-16" />
          {columns.map((c, i) => (
            <th key={c} className="pt-3 font-semibold">
              <button className="flex items-center gap-3.5">
                {c}
                <SortIcon faded={i === 0} />
              </button>
            </th>
          ))}
          <th className="w-9" />
        </tr>
      </thead>
      <tbody>
        {rules.map((r) => (
          <tr key={r.priority} className={clsx("h-16 border-b-2 border-[#f3f2f1]", !r.custom && "text-[#505050]")}>
            <td className="pl-3">
              <input
                type="checkbox"
                aria-label={`Select rule ${r.priority}`}
                disabled={!r.custom}
                className="block size-9 appearance-none rounded border-2 border-[#323130] disabled:border-[#c8c6c4]"
              />
            </td>
            <td className="pt-1">{r.priority}</td>
            <td className="pt-2 pl-0.5 whitespace-nowrap">
              {r.custom ? <a href="#" className="text-[#3276ce]">{r.name}</a> : r.name}
            </td>
            <td className="pt-1">Any</td>
            <td className="pt-1">Any</td>
            <td className="pt-2 pl-0.5">{r.source}</td>
            <td className="pt-2 pl-0.5">{r.destination}</td>
            <td className="pt-1">
              <span className="flex items-center gap-2.5">
                <span className={clsx("flex", !r.custom && "opacity-80")}>
                  <StatusIcon action={r.action} />
                </span>
                {r.action}
              </span>
            </td>
            <td>
              <button aria-label={`Delete rule ${r.priority}`} disabled={!r.custom} className="flex text-[#3276ce] disabled:text-[#b3b0ad]">
                <TrashIcon />
              </button>
            </td>
          </tr>
        ))}
      </tbody>
    </table>
  );
}

export default function App() {
  return (
    <div className="flex min-h-screen flex-col overflow-hidden bg-white font-['Inter',sans-serif]">
      <TabStrip />
      <AddressBar />
      <div className="flex flex-1">
        <SideRail />
        <div className="relative flex min-w-0 flex-1 flex-col border-t border-l border-[#c8c8cc] bg-white font-['Open_Sans',sans-serif] text-[25px] text-[#242424] shadow-[0_0_10px_rgba(0,0,0,0.18)]">
          <PortalHeader />
          <Breadcrumb />
          <PageTitle />
          <div className="mt-8 flex flex-1">
            <ResourceMenu />
            <main className="min-w-0 flex-1 px-10">
              <CommandBar />
              <p className="mt-[42px] pr-5 font-['Noto_Sans',sans-serif] text-[24px] leading-9">
                Network security group security rules are evaluated by priority using the combination of source, source port, destination,
                destination port, and protocol to allow or deny the traffic. A security rule can't have the same priority and direction as an
                existing rule. You can't delete default security rules, but you can override them with rules that have a higher priority.{" "}
                <a href="#" className="ml-1 text-[#3276ce]">
                  Learn more
                  <svg viewBox="0 0 22 22" className="mb-1.5 ml-3 inline w-[22px]" fill="none" stroke="#3276ce" strokeWidth="2">
                    <path d="M9 4H3.500A2.500 2.500 0 0 0 1 6.500v12A2.500 2.500 0 0 0 3.500 21h11a2.500 2.500 0 0 0 2.500-2.500V12M13 1h8v8M21 1L9.500 12.500" />
                  </svg>
                </a>
              </p>
              <Filters />
              <RulesTable />
            </main>
          </div>
        </div>
      </div>
    </div>
  );
}
